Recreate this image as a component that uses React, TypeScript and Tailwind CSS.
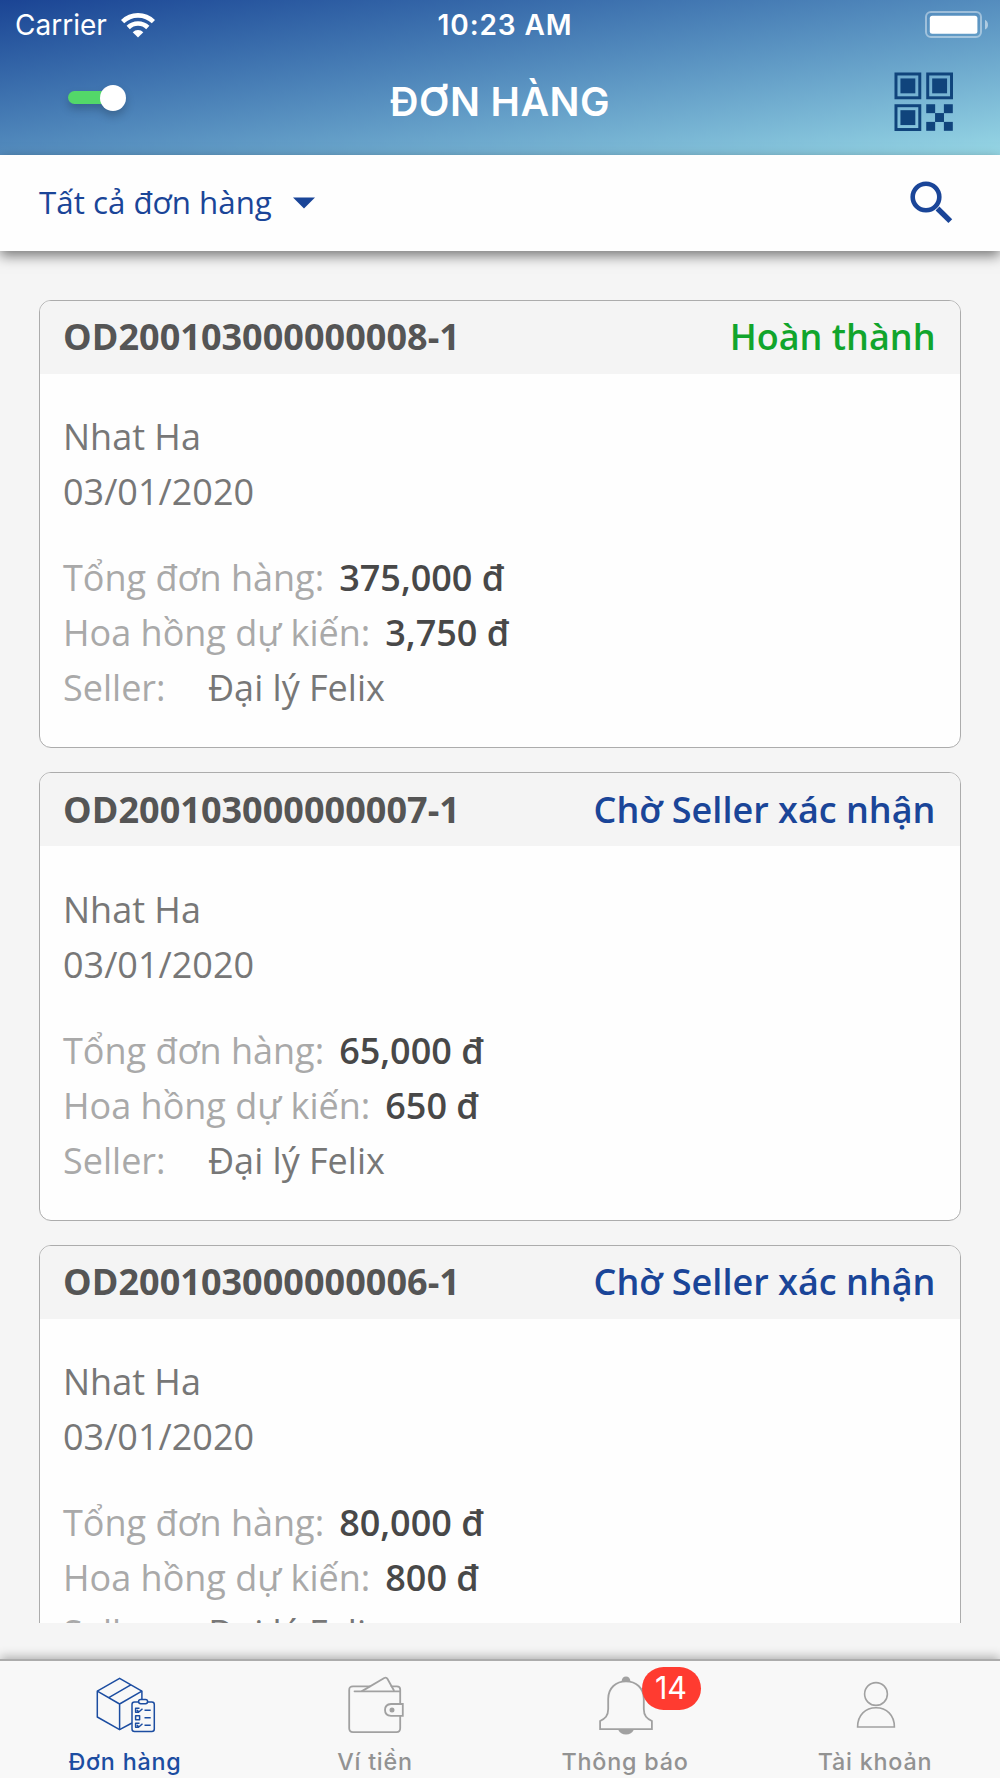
import type { ReactNode } from 'react'
import clsx from 'clsx'

interface Order {
  code: string
  status: string
  done: boolean
  customer: string
  date: string
  total: string
  commission: string
  seller: string
}

const orders: Order[] = [
  {
    code: 'OD200103000000008-1',
    status: 'Hoàn thành',
    done: true,
    customer: 'Nhat Ha',
    date: '03/01/2020',
    total: '375,000 đ',
    commission: '3,750 đ',
    seller: 'Đại lý Felix',
  },
  {
    code: 'OD200103000000007-1',
    status: 'Chờ Seller xác nhận',
    done: false,
    customer: 'Nhat Ha',
    date: '03/01/2020',
    total: '65,000 đ',
    commission: '650 đ',
    seller: 'Đại lý Felix',
  },
  {
    code: 'OD200103000000006-1',
    status: 'Chờ Seller xác nhận',
    done: false,
    customer: 'Nhat Ha',
    date: '03/01/2020',
    total: '80,000 đ',
    commission: '800 đ',
    seller: 'Đại lý Felix',
  },
]

function WifiIcon() {
  return (
    <svg width="34" height="25" viewBox="0 0 34 25" fill="none" stroke="#fff" strokeWidth="4.6">
      <path d="M1.6 8.7 A22 22 0 0 1 32.4 8.7" />
      <path d="M7.2 14.5 A14 14 0 0 1 26.8 14.5" />
      <path d="M17 24.6 L11.7 19.2 A7.6 7.6 0 0 1 22.3 19.2 Z" fill="#fff" stroke="none" />
    </svg>
  )
}

function BatteryIcon() {
  return (
    <svg width="64" height="28" viewBox="0 0 64 28">
      <rect x="1" y="1" width="55" height="25" rx="5" fill="none" stroke="#fff" strokeOpacity="0.42" strokeWidth="2" />
      <rect x="4.8" y="4.8" width="47.6" height="18" rx="2.5" fill="#fff" />
      <path d="M60 8.8 Q63 10.5 63 13.7 Q63 17 60 18.6 Z" fill="#fff" fillOpacity="0.5" />
    </svg>
  )
}

function QrIcon() {
  return (
    <svg width="59.5" height="59.5" viewBox="0 0 60 60" fill="#10447c">
      <g fill="none" stroke="#10447c" strokeWidth="3">
        <rect x="2" y="2" width="24" height="24" />
        <rect x="34" y="2" width="24" height="24" />
        <rect x="2" y="34" width="24" height="24" />
      </g>
      <rect x="6.5" y="6.5" width="15" height="15" />
      <rect x="38.5" y="6.5" width="15" height="15" />
      <rect x="6.5" y="38.5" width="15" height="15" />
      <rect x="32.5" y="32.5" width="9" height="9" />
      <rect x="50.3" y="32.5" width="9" height="9" />
      <rect x="41.4" y="41.4" width="9" height="9" />
      <rect x="32.5" y="50.3" width="9" height="9" />
      <rect x="50.3" y="50.3" width="9" height="9" />
    </svg>
  )
}

function SearchIcon() {
  return (
    <svg width="44" height="44" viewBox="0 0 44 44" fill="none" stroke="#1a4598">
      <circle cx="17" cy="17" r="13.3" strokeWidth="4.6" />
      <path d="M28.5 28.5 L41.3 41.1" strokeWidth="5.4" />
    </svg>
  )
}

function BoxIcon() {
  return (
    <svg width="60" height="56" viewBox="0 0 60 56" fill="none" stroke="#1c4da1" strokeWidth="1.5" strokeLinejoin="round">
      <path d="M36 46 L23.6 52.7 L1.3 40 V14.2 L23.6 1.3 L45.9 14.2 V22.5" />
      <path d="M1.3 14.2 L23.6 27 L45.9 14.2 M23.6 27 V52.7 M12.8 20.6 L34.8 7.8" />
      <rect x="36" y="25" width="22.3" height="29.6" rx="2.5" fill="#f8f8f8" />
      <rect x="42.6" y="22.5" width="9" height="4.2" rx="2.1" fill="#f8f8f8" />
      <path d="M43 35.2 H39.6 V31.2 H43.5 M41 33 L42.8 35 L46.5 31.8" />
      <rect x="39.6" y="38.8" width="4" height="4" />
      <path d="M43 50.2 H39.6 V46.2 H43.5 M41 48 L42.8 50 L46.5 46.8" />
      <path d="M48.5 33.2 H54.7 M48.5 40.8 H54.7 M48.5 48.2 H54.7" />
    </svg>
  )
}

function WalletIcon() {
  return (
    <svg width="56" height="58" viewBox="0 0 56 58" fill="none" stroke="#a1a1a1" strokeWidth="1.8" strokeLinejoin="round" strokeLinecap="round">
      <path d="M22 10.3 H5 Q1.2 10.3 1.2 14 V52.3 Q1.2 56.2 5 56.2 H48.5 Q52.2 56.2 52.2 52.3 V39.8 M52.2 28 V13.5 Q52.2 10.3 48.8 10.3 H43.5" />
      <path d="M6.5 15.3 H52" />
      <path d="M14 15.1 L36.3 2 Q38.3 0.9 39.4 2.8 L45.8 14.3" />
      <path d="M54.8 28 H43 Q37 28.4 37 33.9 Q37 39.4 43 39.8 H54.8 Z" strokeLinejoin="miter" />
      <circle cx="44" cy="33.9" r="1.6" fill="#a1a1a1" />
    </svg>
  )
}

function BellIcon() {
  return (
    <svg width="54" height="60" viewBox="0 0 54 60" fill="none" stroke="#a1a1a1" strokeWidth="1.8">
      <path d="M1.1 54.2 V46 C6 43.5 9.2 41 9.2 34 V24 C9.2 13 17 6.3 27 6.3 C37 6.3 44.8 13 44.8 24 V34 C44.8 41 48 43.5 52.9 46 V54.2 Z" />
      <path d="M22.6 6.6 Q23 1.5 27 1.5 Q31 1.5 31.4 6.6 Z" fill="#a1a1a1" stroke="none" />
      <path d="M19 54.5 Q21.5 59.5 27 59.5 Q32.5 59.5 35 54.5 Z" fill="#a1a1a1" stroke="none" />
    </svg>
  )
}

function UserIcon() {
  return (
    <svg width="40" height="48" viewBox="0 0 40 48" fill="none" stroke="#a1a1a1" strokeWidth="1.6">
      <circle cx="20" cy="13" r="11.4" />
      <path d="M1.6 46 C1.6 34 9.5 26.8 20 26.8 C30.5 26.8 38.4 34 38.4 46 Z" />
    </svg>
  )
}

function Header() {
  return (
    <header className="h-[154.5px] shrink-0 bg-linear-to-br from-[#1b4494] to-[#97d7e5] font-['Inter',sans-serif] text-white">
      <div className="grid h-[50px] grid-cols-[1fr_auto_1fr] items-center pr-[11px] pl-[15px]">
        <div className="flex items-center gap-[14px]">
          <span className="text-[28px] leading-[50px]">Carrier</span>
          <WifiIcon />
        </div>
        <span className="pl-[6px] text-[28px] leading-[50px] font-semibold tracking-[0.9px]">10:23 AM</span>
        <div className="flex justify-end">
          <BatteryIcon />
        </div>
      </div>
      <div className="grid h-[104px] grid-cols-[1fr_auto_1fr] items-center px-[47px]">
        <div className="flex items-center pb-[9px] pl-[21px] drop-shadow-[0_5px_4px_rgba(0,0,0,0.2)]">
          <div className="h-[13px] w-[40px] rounded-l-full bg-[#53d769]" />
          <div className="-ml-2 size-[26px] rounded-full bg-white" />
        </div>
        <h1 className="text-[39.5px] leading-[50px] font-semibold tracking-[0.4px]">ĐƠN HÀNG</h1>
        <div className="flex justify-end">
          <QrIcon />
        </div>
      </div>
    </header>
  )
}

function FilterBar() {
  return (
    <div className="z-10 flex h-[96.5px] shrink-0 items-center justify-between bg-[#fefefe] pr-[47px] pl-[39px] text-[#1a4598] shadow-[0_5px_12px_rgba(0,0,0,0.5)]">
      <button className="flex items-center gap-[21px] text-[31.3px] leading-[43px]">
        Tất cả đơn hàng
        <svg width="22" height="12" viewBox="0 0 22 12" fill="#1a4598">
          <path d="M0 0.5 H22 L11 11.5 Z" />
        </svg>
      </button>
      <div className="pb-[2px]">
        <SearchIcon />
      </div>
    </div>
  )
}

function OrderCard({ order }: { order: Order }) {
  return (
    <article className="h-[448.5px] shrink-0 overflow-hidden rounded-xl border border-[#acacac] bg-[#fefefe] text-[36px] leading-[55px]">
      <div className="flex h-[73px] items-center justify-between bg-[#f4f4f4] pr-[24.5px] pb-px pl-[23px]">
        <span className="font-bold tracking-[0.04px] text-[#555]">{order.code}</span>
        <span className={clsx('font-semibold', order.done ? 'text-[#11a52c]' : 'text-[#1a4598]')}>
          {order.status}
        </span>
      </div>
      <div className="px-[23px] pt-[35.5px] text-[#777]">
        <p>{order.customer}</p>
        <p>{order.date}</p>
        <div className="mt-[31px] flex gap-[15px]">
          <span className="text-[#a9a9a9]">Tổng đơn hàng:</span>
          <span className="font-semibold text-[#484848]">{order.total}</span>
        </div>
        <div className="flex gap-[15px]">
          <span className="text-[#a9a9a9]">Hoa hồng dự kiến:</span>
          <span className="font-semibold text-[#484848]">{order.commission}</span>
        </div>
        <div className="flex">
          <span className="w-[145px] text-[#a9a9a9]">Seller:</span>
          <span>{order.seller}</span>
        </div>
      </div>
    </article>
  )
}

interface TabProps {
  label: string
  icon: ReactNode
  active?: boolean
  badge?: number
}

function Tab({ label, icon, active, badge }: TabProps) {
  return (
    <button
      className={clsx(
        'flex flex-1 flex-col items-center text-[23.3px] leading-[30px] font-medium tracking-[0.8px]',
        active ? 'text-[#1c4da1]' : 'text-[#929292]',
      )}
    >
      <span className="relative flex h-[86px] items-center justify-center pt-[2px] pl-px">
        {icon}
        {badge && (
          <span className="absolute top-[6px] left-[44px] flex h-[43px] w-[59px] items-center justify-center rounded-full bg-[#ff3b30] pb-px text-[30.5px] font-normal tracking-normal text-white">
            {badge}
          </span>
        )}
      </span>
      {label}
    </button>
  )
}

export default function App() {
  return (
    <div className="flex h-[1778px] w-[1000px] flex-col overflow-hidden bg-[#f5f5f5] font-['Open_Sans',sans-serif]">
      <Header />
      <FilterBar />
      <main className="mb-[36px] flex min-h-0 flex-1 flex-col gap-6 overflow-hidden px-[39px] pt-[48.5px]">
        {orders.map((order) => (
          <OrderCard key={order.code} order={order} />
        ))}
      </main>
      <nav className="flex h-[119px] shrink-0 border-t-2 border-[#acacac] bg-[#f8f8f8] font-['Inter',sans-serif] shadow-[0_-2px_10px_rgba(0,0,0,0.3)]">
        <Tab label="Đơn hàng" icon={<BoxIcon />} active />
        <Tab label="Ví tiền" icon={<WalletIcon />} />
        <Tab label="Thông báo" icon={<BellIcon />} badge={14} />
        <Tab label="Tài khoản" icon={<UserIcon />} />
      </nav>
    </div>
  )
}
